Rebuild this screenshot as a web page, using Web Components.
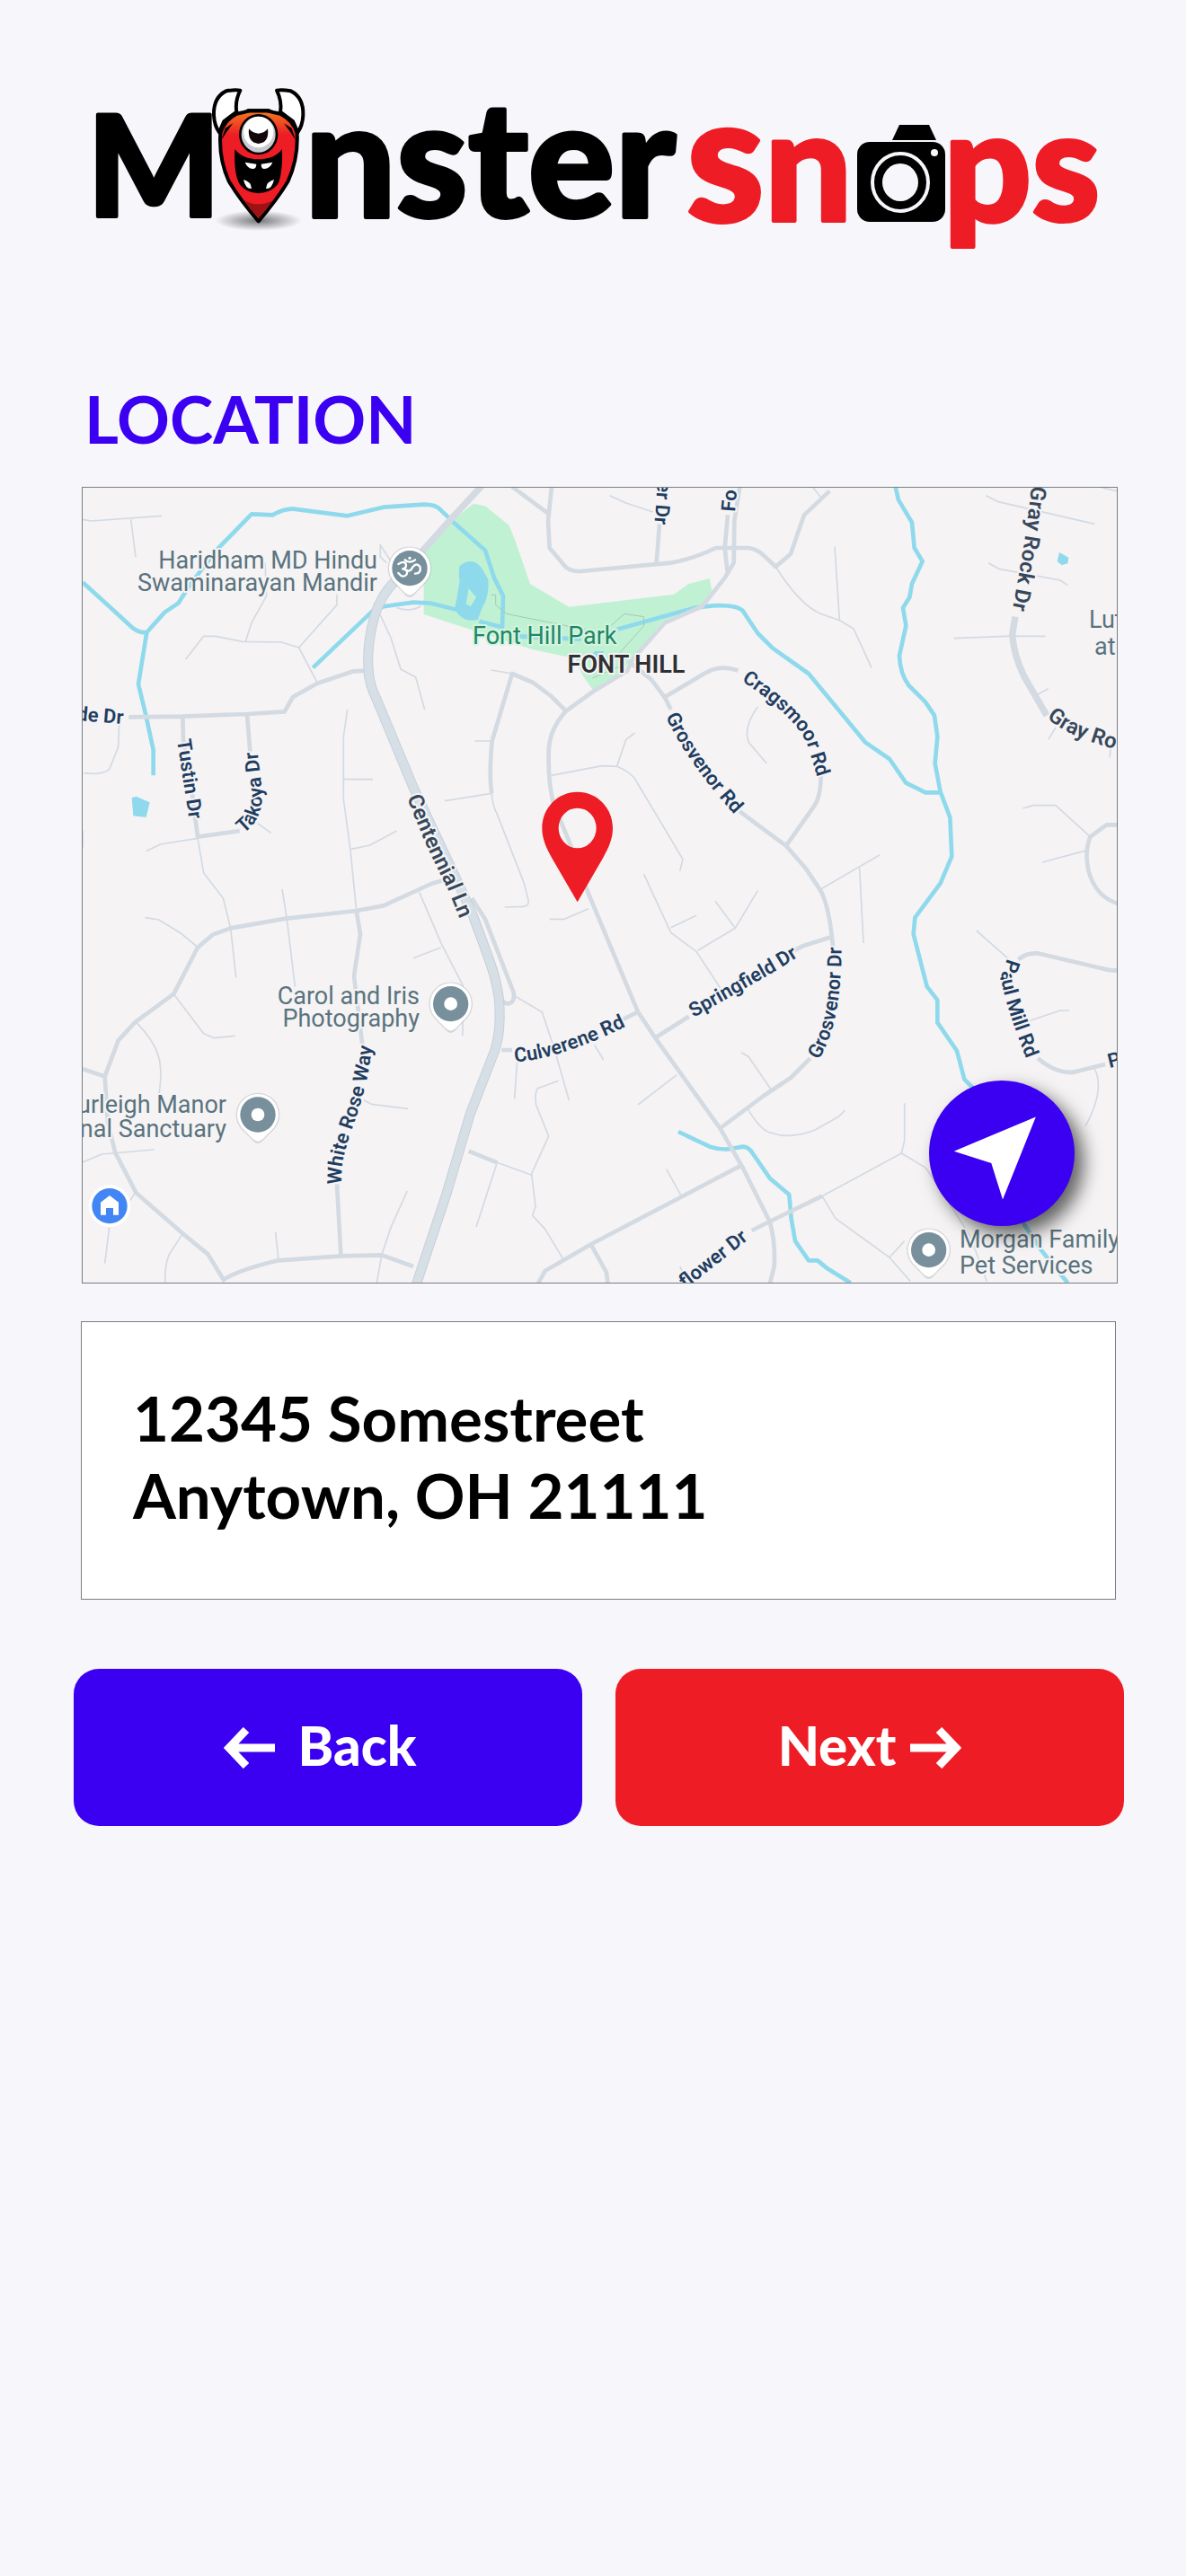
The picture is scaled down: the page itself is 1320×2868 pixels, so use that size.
<!DOCTYPE html>
<html lang="en">
<head>
<meta charset="utf-8">
<meta name="viewport" content="width=device-width, initial-scale=1">
<title>Monster Snaps - Location</title>
<style>
  body {
    margin: 0;
    min-height: 100vh;
    background: #f6f6fb;
    color: #000000;
    font-family: Lato, "Open Sans", sans-serif;
    --blue: #3b00f2;
    --red: #ee1c25;
  }
</style>
</head>
<body>
<snap-page>
  <snap-logo slot="header"></snap-logo>
  <span slot="title">LOCATION</span>
  <snap-map></snap-map>
  <snap-address>
    <span>12345 Somestreet</span>
    <span>Anytown, OH 21111</span>
  </snap-address>
  <snap-actions>
    <snap-button direction="back">Back</snap-button>
    <snap-button direction="next">Next</snap-button>
  </snap-actions>
</snap-page>

<script>
class SnapPage extends HTMLElement {
  constructor() {
    super();
    this.attachShadow({ mode: "open" });
    this.shadowRoot.innerHTML = `
      <style>
        :host {
          display: block;
          padding: 90px 69px 90px 82px;
        }

        header {
          display: block;
        }

        main {
          display: flex;
          flex-direction: column;
        }

        h1 {
          margin: 133px 12px 33px;
          font-size: 73px;
          line-height: 86px;
          font-weight: 700;
          color: var(--blue);
        }
      </style>
      <header><slot name="header"></slot></header>
      <main>
        <h1><slot name="title"></slot></h1>
        <slot></slot>
      </main>
    `;
  }
}

class SnapLogo extends HTMLElement {
  constructor() {
    super();
    this.attachShadow({ mode: "open" });
    this.shadowRoot.innerHTML = `
      <style>
        :host {
          display: block;
        }

        .logo {
          display: block;
          width: 100%;
          height: auto;
          overflow: visible;
        }

        text {
          font-family: Lato, sans-serif;
          font-weight: 900;
          stroke-width: 4px;
          stroke-linejoin: round;
        }

        .black {
          fill: #000000;
          stroke: #000000;
        }

        .red {
          fill: var(--red);
          stroke: var(--red);
        }
      </style>
      <svg class="logo" viewBox="82 90 1169 200" role="img" aria-label="Monster Snaps">
        <defs>
          <radialGradient id="shade">
            <stop offset="0" stop-color="#77777c"></stop>
            <stop offset="1" stop-color="#77777c" stop-opacity="0"></stop>
          </radialGradient>
          <linearGradient id="skin" x1="0" y1="0" x2="0" y2="1">
            <stop offset="0" stop-color="#f47a20"></stop>
            <stop offset=".22" stop-color="#ee1c25"></stop>
            <stop offset="1" stop-color="#ee1c25"></stop>
          </linearGradient>
        </defs>
        <text class="black" x="97" y="241" font-size="156">M</text>
        <text class="black" x="339" y="242" font-size="180">nster</text>
        <text class="red" x="764" y="246" font-size="196">s</text>
        <text class="red" x="851" y="246" font-size="172">n</text>
        <text class="red" x="1050" y="246" font-size="172">ps</text>

        <!-- monster -->
        <svg x="220" y="80" width="140" height="190" viewBox="0 0 420 570">
          <ellipse cx="203" cy="497" rx="145" ry="34" fill="url(#shade)"></ellipse>
          <g stroke="#000000" stroke-width="12" stroke-linejoin="round">
            <path d="M142 62Q126 58 95 64Q52 85 54 145Q56 180 72 202L88 165L130 134Q124 98 142 62z" fill="#ffffff"></path>
            <path d="M264 62Q280 58 311 64Q354 85 352 145Q350 180 334 202L318 165L276 134Q282 98 264 62z" fill="#ffffff"></path>
            <path d="M203 499Q140 425 104 365Q70 290 76 205Q88 162 130 140L150 136L170 130H236L256 136L276 140Q320 162 332 205Q336 290 302 365Q266 425 203 499z" fill="url(#skin)"></path>
          </g>
          <path d="M154 428Q203 456 252 428Q230 462 203 489Q176 462 154 428z" fill="#9e1114"></path>
          <path d="M79 228L92 188L118 172L96 202zM327 228L314 188L288 172L310 202zM148 141L166 124H240L258 141L230 136H176z"></path>
          <path d="M124 258Q150 292 203 292Q256 292 282 258Q284 340 268 375Q245 404 203 406Q160 404 140 375Q120 340 124 258z"></path>
          <ellipse cx="203" cy="209" rx="65" ry="68"></ellipse>
          <ellipse cx="203" cy="209" rx="57" ry="60" fill="#c9cbd0"></ellipse>
          <ellipse cx="203" cy="201" rx="50" ry="52" fill="#ffffff"></ellipse>
          <path d="M171 190Q182 204 203 206Q224 204 234 190Q240 236 203 240Q166 236 171 190z" fill="#120709"></path>
          <path d="M158 302L196 308Q196 324 184 324Q166 322 158 302zM250 302L212 308Q212 324 222 324Q242 322 250 302z" fill="#ffffff"></path>
          <path d="M153 360Q178 366 180 390Q160 392 153 360zM255 360Q230 366 228 390Q248 392 255 360z" fill="#ffffff"></path>
        </svg>

        <!-- camera -->
        <path d="M1001 139H1034L1042 156H993z"></path>
        <rect x="954" y="158" width="98" height="89" rx="14"></rect>
        <ellipse cx="1002" cy="203" rx="31" ry="32" fill="none" stroke="#f6f6fb" stroke-width="4"></ellipse>
        <ellipse cx="1002" cy="203" rx="20" ry="21" fill="#f6f6fb"></ellipse>
        <circle cx="1040" cy="170" r="4" fill="#f6f6fb"></circle>
      </svg>
    `;
  }
}

class SnapMap extends HTMLElement {
  constructor() {
    super();
    this.attachShadow({ mode: "open" });
    this.shadowRoot.innerHTML = `
      <style>
        :host {
          display: block;
          position: relative;
          margin: 0 7px 0 9px;
          border: 1px solid #7b7d82;
          background: #f5f3f4;
          overflow: hidden;
        }

        svg.map {
          display: block;
          width: 100%;
          height: auto;
        }

        .line {
          fill: none;
          stroke-linejoin: round;
        }

        .water { stroke: #8edaec; stroke-width: 14; }
        .lane { stroke: #d3dae2; stroke-width: 5; }
        .road { stroke: #d3dae1; stroke-width: 14; }
        .avenue { stroke: #d3dae1; stroke-width: 22; }
        .edge { stroke: #c3ccd6; stroke-width: 33; }
        .highway { stroke: #d6dee6; stroke-width: 28; }
        .trail { stroke: #a5c9b4; stroke-width: 3; }

        text {
          font-family: Roboto, sans-serif;
          paint-order: stroke;
          stroke: #f5f3f4;
          stroke-width: 4px;
          stroke-linejoin: round;
        }

        .place {
          font-size: 27px;
          fill: #5a737e;
        }

        .park { fill: #1f8767; stroke: #d4f4df; }

        .town {
          font-size: 27px;
          font-weight: 600;
          fill: #2f3033;
          text-anchor: middle;
        }

        .street {
          font-size: 22px;
          font-weight: 600;
          fill: #203c60;
        }

        .main {
          font-size: 24px;
          font-weight: 600;
          fill: #37475a;
        }

        .end { text-anchor: end; }

        button {
          position: absolute;
          right: 47px;
          bottom: 63px;
          width: 162px;
          height: 162px;
          padding: 0;
          border: 0;
          border-radius: 50%;
          background: var(--blue);
          box-shadow: 10px 10px 20px rgba(0, 0, 0, 0.6);
          cursor: pointer;
        }

        button svg {
          display: block;
          width: 100%;
          height: 100%;
        }
      </style>

      <svg class="map" viewBox="0 0 1151 885" role="img" aria-label="Map of Font Hill">
        <defs>
          <g id="poi">
            <path d="M0 97Q-12 95 -22 81L-56 47A73 73 0 1 1 56 47L22 81Q12 95 0 97z" fill="#b9b9be" opacity=".5"></path>
            <path d="M0 90Q-12 88 -22 76L-53 44A69 69 0 1 1 53 44L22 76Q12 88 0 90z" fill="#ffffff"></path>
            <circle r="59" fill="#78909c"></circle>
          </g>
          <path id="p-de" d="M-7 259L70 265"></path>
          <path id="p-tustin" d="M105 281L121 386"></path>
          <path id="p-takoya" d="M179 385Q200 370 200 340L192 270"></path>
          <path id="p-centennial" d="M361 345Q380 396 406 446L432 510"></path>
          <path id="p-er" d="M640 -7L635 60"></path>
          <path id="p-fo" d="M726 27L732 -40"></path>
          <path id="p-grosvenor-rd" d="M649 255Q676 312 735 374"></path>
          <path id="p-cragsmoor" d="M733 215Q788 250 806 284L820 330"></path>
          <path id="p-springfield" d="M680 590L768 540L810 514"></path>
          <path id="p-grosvenor-dr" d="M819 637Q848 592 844 490"></path>
          <path id="p-culverene" d="M481 639Q530 638 620 592"></path>
          <path id="p-white" d="M288 776C286 720 318 700 324 600"></path>
          <path id="p-flower" d="M671 892L760 822"></path>
          <path id="p-gray" d="M1056 -2Q1050 60 1030 160"></path>
          <path id="p-gray-2" d="M1073 256Q1102 283 1180 298"></path>
          <path id="p-paul" d="M1029 524L1022 545Q1027 580 1060 660"></path>
          <path id="p-pa" d="M1143 646L1190 634"></path>
        </defs>

        <!-- land, water and roads use a grid three times finer than the labels -->
        <svg width="1151" height="885" viewBox="36 39 3453 2655">
          <path fill="#c1f1d3" d="M1340 92L1380 100L1460 165L1480 215L1530 360L1660 437L2010 395L2060 360L2130 342L2137 385L2100 435L1970 490L1830 660L1740 715L1705 665L1680 610L1540 580L1175 462V245L1270 150z"></path>
          <g class="line lane">
            <path d="M36 145L65 150L300 133M197 145L213 270M380 612L440 535H480L570 553L700 555L758 573L820 692M580 553L600 490L650 400L645 290M758 573L885 430V395"></path>
            <path d="M1030 465L1065 540L1098 645L1148 672L1178 780M158 830L155 905L125 980Q100 1000 40 992M248 1253L295 1230L420 1210L440 1325L505 1410L530 1510L548 1675M620 1160L665 1192M36 1185V1240"></path>
            <path d="M920 780L907 870V1080L930 1250L950 1450M907 1013H1005M930 1247L995 1233L1085 1185M245 1475L290 1482L365 1528L418 1572M702 1380L718 1480L745 1705"></path>
            <path d="M1075 300L1030 230V270L1050 290M1085 440Q1130 455 1165 435"></path>
            <path d="M340 1730L440 1862L475 1877L545 1870M215 1825Q290 1900 295 1970Q300 2010 290 2070M36 2292L100 2265L275 2250M975 2085L1000 2098L1122 2113M1120 2388L1065 2510L1035 2600L1018 2695M680 2525L690 2620M370 2530L325 2600Q308 2640 312 2695M125 2510L110 2630M210 2395L195 2420"></path>
            <path d="M1160 1390L1235 1565L1305 1700V1870M1140 1610L1232 1575M1475 1735L1570 1790L1610 1910L1660 2085M1625 2020L1555 2045Q1545 2060 1550 2100L1592 2205L1535 2330L1548 2440L1538 2470L1580 2515L1640 2615M1420 2293L1535 2335M1420 2293L1350 2508M1487 1950L1478 2080M1745 1900L1775 1950M1595 1480H1645L1725 1445M2020 2000L1890 2100M1985 2315L2035 2405"></path>
            <path d="M2235 1925L2260 1940L2335 2050M2255 2110Q2300 2190 2340 2195Q2400 2215 2480 2185L2560 2140L2582 2118M1910 1330L2000 1525L2085 1588L2165 1710M2000 1508L2085 1468M2090 1585L2215 1510L2290 1385M2215 1510L2148 1420M2030 2640L2060 2695"></path>
            <path d="M1795 65L1850 90L1940 120M1600 1000L1770 968L1820 970Q1870 990 1885 1020L2040 1280L2030 1320M1820 970L1850 880L1880 858M1345 885H1400M1245 1085L1400 1060M2290 770Q2240 840 2260 890L2320 960M1400 648L1470 660M1402 1060Q1404 1100 1420 1130L1510 1360L1525 1420Q1525 1438 1505 1438L1445 1440"></path>
            <path d="M2350 303Q2430 430 2500 460L2565 483L2610 510L2670 640M2547 235L2563 480M2475 39L2500 70M3052 65L3090 85L3415 160M3060 290L3095 310L3300 348L3325 365M2945 542L3120 535H3250M3215 735L3260 710M3285 840L3260 880M3470 900L3465 940"></path>
            <path d="M3175 1110L3210 1100H3285L3400 1205M3240 1290L3390 1250M2500 1380L2698 1265M2630 1310L2643 1560M3020 1518L3130 1615M3195 1820L3300 1785H3330M3415 1980Q3450 2050 3385 2170M2505 2405L2770 2262L2780 2220V2095M2770 2262L2850 2310Q2900 2380 3000 2540L3055 2690M2505 2405L2550 2480L2730 2610L2800 2690M2730 2610L2780 2555M3440 39L3490 50"></path>
          </g>
          <g class="line water">
            <path d="M36 355L130 440L200 505Q225 525 250 522L310 455L355 425L400 355L490 240L600 127L670 130Q710 108 740 110L920 133L1040 104L1175 95Q1215 95 1230 112L1280 160L1380 248L1410 340L1440 400L1437 505L1360 485"></path>
            <path d="M250 522L222 695L245 790L272 915V1000M805 640L1010 445L1045 435L1140 422L1200 425L1290 448M1490 535L1700 545"></path>
            <path d="M1820 512L2080 440L2140 433Q2220 430 2240 450L2290 525L2340 575L2460 660L2650 890L2730 945L2785 1025L2850 1057H2900"></path>
            <path d="M2750 36L2760 80L2805 155L2813 240L2840 285L2805 360L2797 405L2775 440L2785 500L2763 600Q2765 660 2795 700L2850 755L2880 800L2890 870L2882 960L2900 1055L2932 1140L2938 1270L2900 1360L2815 1475L2810 1530L2855 1705L2890 1750V1825L2955 1920L2980 2015L3010 2045L3180 2500L3240 2590L3325 2695"></path>
            <path d="M2025 2190L2130 2240Q2170 2252 2200 2247L2240 2240Q2260 2240 2275 2265L2330 2345L2395 2400L2402 2480L2415 2555L2460 2620H2490L2520 2645L2600 2695"></path>
          </g>
          <g fill="#8edaec">
            <path d="M200 1075L215 1070L260 1090L248 1140L205 1135zM3297 255L3328 272L3325 292L3305 298L3290 285zM1735 600L1745 585H1775V615H1735z"></path>
            <path fill-rule="evenodd" d="M1295 300Q1340 265 1370 310L1390 345Q1395 400 1370 440L1355 480Q1310 490 1285 455Q1275 440 1285 410L1295 350Q1290 330 1295 300zM1325 375L1316 428L1332 435L1350 405z"></path>
          </g>
          <path class="line trail" d="M1400 397H1415V430L1450 460L1650 500L1720 515M1800 500L1845 460L1910 470V500L1830 590M1738 675L1830 635"></path>
          <g class="line road">
            <path d="M190 805L370 803L585 795L710 787L738 738L820 692L940 652L985 650M370 803L372 880L395 1010L420 1205L560 1185M585 795L595 920"></path>
            <path d="M1240 1350L1200 1362L1040 1435L950 1452L715 1478L530 1510L470 1532L420 1575L340 1730L210 1825L155 1885L110 2005L120 2160L145 2260L215 2395L370 2530L455 2600L510 2690M36 1980L108 2005"></path>
            <path d="M950 1452L963 1530L942 1670L970 1900M885 2365L898 2600M505 2685Q560 2650 690 2620L900 2605L1035 2602L1140 2640"></path>
            <path d="M1470 36L1590 125M1602 36L1590 150L1595 240L1650 305Q1670 320 1700 318L2000 290Q2080 275 2150 240H2260Q2290 245 2310 265L2350 303L2400 260L2445 130L2530 50M1952 290L1962 160M2190 130L2180 240L2190 330"></path>
            <path d="M2230 36L2212 150L2210 290L2180 340L2105 435L1980 490L1870 615L1855 650L1740 720L1650 785Q1590 850 1592 930Q1590 1030 1610 1100L1660 1220L1725 1395L1890 1790L1950 1880L2165 2180L2240 2310L2330 2490Q2350 2560 2345 2640L2330 2700"></path>
            <path d="M1650 785L1600 735L1540 690L1470 660L1403 885Q1392 1000 1402 1060M1860 620L1935 680L1980 740L2000 780M2230 1120L2310 1180L2385 1235L2450 1310L2500 1385Q2530 1440 2542 1580M2465 1945L2400 2010L2310 2070L2165 2178"></path>
            <path d="M1980 738L2120 655Q2170 630 2225 650M2500 980Q2505 1060 2480 1100L2385 1235M1950 1875L2060 1805M2410 1585L2440 1570L2535 1540M1435 1917H1470M1840 1815L1890 1790"></path>
            <path d="M2240 2300L1735 2565L1580 2655L1555 2700M1735 2570L1785 2660L1790 2700M2270 2520L2330 2490L2505 2405M1325 2255L1420 2293M1335 1410L1380 1480L1475 1725Q1480 1765 1450 1762L1440 1755"></path>
            <path d="M3160 1615Q3190 1590 3230 1595L3440 1645Q3470 1655 3500 1650M3225 1945Q3290 2000 3350 1990L3450 1965M3500 1165H3455L3400 1205Q3380 1260 3395 1320Q3420 1410 3500 1430"></path>
          </g>
          <path class="line avenue" d="M1375 26L1260 150L1180 240L1080 350M3150 470L3140 530Q3145 600 3180 670L3255 800"></path>
          <path class="line edge" d="M1080 350Q1030 400 1010 470Q985 560 990 640Q990 690 1015 740L1140 1040L1290 1360L1340 1470L1395 1620Q1430 1720 1428 1790Q1432 1880 1400 1950L1330 2130Q1300 2230 1250 2400L1150 2700"></path>
          <path class="line highway" d="M1080 350Q1030 400 1010 470Q985 560 990 640Q990 690 1015 740L1140 1040L1290 1360L1340 1470L1395 1620Q1430 1720 1428 1790Q1432 1880 1400 1950L1330 2130Q1300 2230 1250 2400L1150 2700"></path>

          <use href="#poi" x="1128" y="308"></use>
          <path d="M1090 294Q1114 280 1116 298Q1116 310 1102 310Q1124 312 1118 328Q1106 344 1090 324M1118 314Q1130 322 1138 304Q1150 288 1162 302Q1168 326 1146 326M1112 280Q1128 294 1146 280" fill="none" stroke="#ffffff" stroke-width="7" stroke-linecap="round"></path>
          <circle cx="1128" cy="274" r="5" fill="#ffffff"></circle>
          <use href="#poi" x="1265" y="1763"></use>
          <circle cx="1265" cy="1763" r="22" fill="#ffffff"></circle>
          <use href="#poi" x="621" y="2133"></use>
          <circle cx="621" cy="2133" r="22" fill="#ffffff"></circle>
          <use href="#poi" x="2861" y="2585"></use>
          <circle cx="2861" cy="2585" r="22" fill="#ffffff"></circle>

          <circle cx="126" cy="2438" r="70" fill="#ffffff"></circle>
          <circle cx="126" cy="2438" r="59" fill="#4285f4"></circle>
          <path d="M96 2468V2426L126 2403L156 2426V2468H138V2445H114V2468z" fill="#ffffff"></path>
        </svg>

        <g class="place">
          <text class="end" x="328" y="90">Haridham MD Hindu</text>
          <text class="end" x="328" y="115">Swaminarayan Mandir</text>
          <text class="park" x="434" y="174">Font Hill Park</text>
          <text class="end" x="375" y="575">Carol and Iris</text>
          <text class="end" x="375" y="600">Photography</text>
          <text class="end" x="160" y="696">urleigh Manor</text>
          <text class="end" x="160" y="723">nal Sanctuary</text>
          <text x="976" y="846">Morgan Family</text>
          <text x="976" y="875">Pet Services</text>
          <text x="1120" y="156">Lut</text>
          <text x="1126" y="186">at</text>
        </g>
        <text class="town" x="605" y="206">FONT HILL</text>
        <g class="street">
          <text><textPath href="#p-de">de Dr</textPath></text>
          <text><textPath href="#p-tustin">Tustin Dr</textPath></text>
          <text><textPath href="#p-takoya">Takoya Dr</textPath></text>
          <text><textPath href="#p-er">er Dr</textPath></text>
          <text><textPath href="#p-fo">Fo</textPath></text>
          <text><textPath href="#p-grosvenor-rd">Grosvenor Rd</textPath></text>
          <text><textPath href="#p-cragsmoor">Cragsmoor Rd</textPath></text>
          <text><textPath href="#p-springfield">Springfield Dr</textPath></text>
          <text><textPath href="#p-grosvenor-dr">Grosvenor Dr</textPath></text>
          <text><textPath href="#p-culverene">Culverene Rd</textPath></text>
          <text><textPath href="#p-white">White Rose Way</textPath></text>
          <text><textPath href="#p-flower">flower Dr</textPath></text>
          <text><textPath href="#p-paul">Paul Mill Rd</textPath></text>
          <text><textPath href="#p-pa">P</textPath></text>
        </g>
        <g class="main">
          <text><textPath href="#p-centennial">Centennial Ln</textPath></text>
          <text><textPath href="#p-gray">Gray Rock Dr</textPath></text>
          <text><textPath href="#p-gray-2">Gray Ro</textPath></text>
        </g>

        <!-- selected spot -->
        <svg width="1151" height="885" viewBox="36 39 3453 2655">
          <path fill="#ee1c25" fill-rule="evenodd" d="M1688 1055C1622 1055 1570 1109 1570 1176C1570 1212 1584 1242 1604 1278L1688 1423L1772 1278C1792 1242 1806 1212 1806 1176C1806 1109 1754 1055 1688 1055zM1688 1109A63 67 0 1 1 1688 1243A63 67 0 1 1 1688 1109z"></path>
        </svg>
      </svg>

      <button type="button" aria-label="Use my location">
        <svg viewBox="0 0 484 484" aria-hidden="true"><path d="M83 235L355 121L245 396L207 275z" fill="#ffffff"></path></svg>
      </button>
    `;
  }
}

class SnapAddress extends HTMLElement {
  constructor() {
    super();
    this.attachShadow({ mode: "open" });
    this.shadowRoot.innerHTML = `
      <style>
        :host {
          display: block;
          margin: 42px 9px 0 8px;
          border: 1px solid #7b7d82;
          background: #ffffff;
        }

        address {
          display: flex;
          flex-direction: column;
          padding: 64px 57px 72px;
          font-size: 69px;
          line-height: 86px;
          font-weight: 700;
          font-style: normal;
        }
      </style>
      <address><slot></slot></address>
    `;
  }
}

class SnapActions extends HTMLElement {
  constructor() {
    super();
    this.attachShadow({ mode: "open" });
    this.shadowRoot.innerHTML = `
      <style>
        :host {
          display: grid;
          grid-template-columns: 1fr 1fr;
          gap: 37px;
          margin-top: 77px;
        }
      </style>
      <slot></slot>
    `;
  }
}

class SnapButton extends HTMLElement {
  constructor() {
    super();
    this.attachShadow({ mode: "open" });
    this.shadowRoot.innerHTML = `
      <style>
        :host {
          display: block;
        }

        button {
          display: flex;
          align-items: center;
          justify-content: center;
          gap: 16px;
          width: 100%;
          height: 175px;
          padding: 0;
          border: 0;
          border-radius: 28px;
          background: var(--red);
          color: #ffffff;
          font: 900 60px/72px Lato, sans-serif;
          cursor: pointer;
        }

        span {
          padding-bottom: 6px;
        }

        svg {
          width: 57px;
          height: 46px;
          fill: none;
          stroke: currentColor;
          stroke-width: 9;
        }

        :host([direction="back"]) button {
          gap: 26px;
          padding-right: 18px;
          background: var(--blue);
        }

        :host([direction="next"]) button {
          flex-direction: row-reverse;
        }

        :host([direction="next"]) svg {
          transform: scaleX(-1);
        }
      </style>
      <button type="button">
        <svg viewBox="0 0 57 46" aria-hidden="true"><path d="M57 23H8M25 3L6 23L25 43"></path></svg>
        <span><slot></slot></span>
      </button>
    `;
  }
}

customElements.define("snap-page", SnapPage);
customElements.define("snap-logo", SnapLogo);
customElements.define("snap-map", SnapMap);
customElements.define("snap-address", SnapAddress);
customElements.define("snap-actions", SnapActions);
customElements.define("snap-button", SnapButton);
</script>
</body>
</html>
